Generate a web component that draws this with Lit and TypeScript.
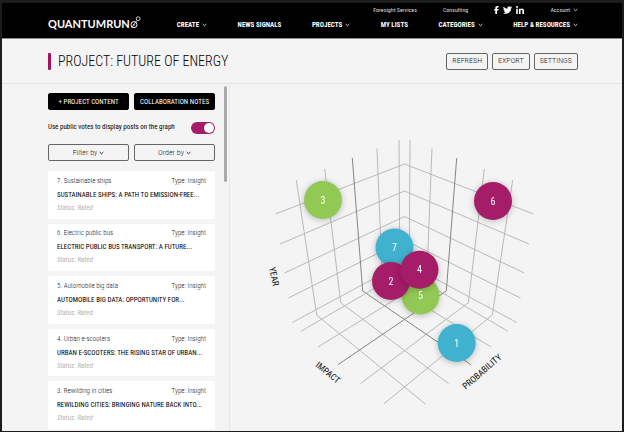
import { LitElement, html, svg, css } from "lit";
import { customElement, state } from "lit/decorators.js";

type Point = [number, number];

interface Post {
  id: number;
  topic: string;
  title: string;
}

interface Bubble {
  id: number;
  x: number;
  y: number;
  tone: "green" | "plum" | "blue";
}

const posts: Post[] = [
  { id: 7, topic: "Sustainable ships", title: "SUSTAINABLE SHIPS: A PATH TO EMISSION-FREE..." },
  { id: 6, topic: "Electric public bus", title: "ELECTRIC PUBLIC BUS TRANSPORT: A FUTURE..." },
  { id: 5, topic: "Automobile big data", title: "AUTOMOBILE BIG DATA: OPPORTUNITY FOR..." },
  { id: 4, topic: "Urban e-scooters", title: "URBAN E-SCOOTERS: THE RISING STAR OF URBAN..." },
  { id: 3, topic: "Rewilding in cities", title: "REWILDING CITIES: BRINGING NATURE BACK INTO..." },
];

const navItems = [
  { label: "CREATE", menu: true },
  { label: "NEWS SIGNALS", menu: false },
  { label: "PROJECTS", menu: true },
  { label: "MY LISTS", menu: false },
  { label: "CATEGORIES", menu: true },
  { label: "HELP & RESOURCES", menu: true },
];

const bubbles: Bubble[] = [
  { id: 3, x: 323, y: 200, tone: "green" },
  { id: 6, x: 493, y: 201, tone: "plum" },
  { id: 7, x: 394.5, y: 247.5, tone: "blue" },
  { id: 5, x: 420.5, y: 295.5, tone: "green" },
  { id: 2, x: 391, y: 281, tone: "plum" },
  { id: 4, x: 419.5, y: 269.7, tone: "plum" },
  { id: 1, x: 456.7, y: 343, tone: "blue" },
];

/* Left half of the cube; the right half is its reflection. */
const levels: [Point, Point][] = [
  [[275.5, 214], [404.5, 164]],
  [[280, 244], [404.5, 191]],
  [[284.5, 273], [404.5, 216.5]],
  [[288.5, 298], [404.5, 240]],
  [[292.3, 322.5], [404.5, 262]],
];

const columns: { path: Point[]; strong?: boolean }[] = [
  { path: [[296.3, 180], [316.7, 315], [425.3, 404]] },
  { path: [[324.7, 169], [340.7, 302.7], [448.6, 383.7]] },
  { path: [[352.3, 158], [362.7, 291], [471, 364.7]], strong: true },
  { path: [[377, 148.5], [382.3, 280], [491, 347]] },
  { path: [[399, 140], [399.8, 268], [508, 331.3]] },
];

const mirror = ([x, y]: Point): Point => [809 - x, y];
const toPoints = (path: Point[]) => path.map((p) => p.join(",")).join(" ");

const chevron = html`<svg class="chevron" viewBox="0 0 6 4" aria-hidden="true">
  <path d="M0.8 0.8 L3 2.9 L5.2 0.8" fill="none" stroke="currentColor" />
</svg>`;

@customElement("app-header")
export class AppHeader extends LitElement {
  static styles = css`
    :host {
      display: flex;
      align-items: flex-end;
      gap: 36px;
      padding: 2px 44px 8px 46px;
      background: #000;
      border-bottom: 1px solid #8a8a8a;
      color: #fff;
    }
    .logo {
      display: flex;
      align-items: flex-end;
      color: #fff;
      text-decoration: none;
      font: 700 11px/12px Lato, sans-serif;
    }
    .mark {
      width: 11px;
      height: 13px;
      margin-bottom: 1px;
    }
    .menus {
      flex: 1;
      min-width: 0;
      display: flex;
      flex-direction: column;
      gap: 5px;
    }
    .top,
    .main {
      display: flex;
      align-items: center;
    }
    .top {
      justify-content: flex-end;
      gap: 26px;
      font-size: 6px;
      line-height: 10px;
      color: #ddd;
    }
    .main {
      justify-content: space-between;
      font-size: 7px;
      line-height: 10px;
      font-weight: 700;
    }
    a,
    button {
      color: inherit;
      text-decoration: none;
      white-space: nowrap;
    }
    button {
      display: flex;
      align-items: center;
      gap: 3px;
      padding: 0;
      border: 0;
      background: none;
      font: inherit;
    }
    .chevron {
      width: 5px;
      height: 4px;
    }
    .social {
      display: flex;
      align-items: center;
      gap: 4px;
      color: #fff;
    }
    .social a {
      display: flex;
    }
    .social svg {
      height: 8px;
    }
  `;

  render() {
    return html`
      <a class="logo" href="#" aria-label="Quantumrun home">
        <span>QUANTUMRUN</span>
        <svg class="mark" viewBox="0 0 11 13" fill="none" stroke="#fff" aria-hidden="true">
          <circle cx="4" cy="8.6" r="3" />
          <circle cx="8.2" cy="2.7" r="1.9" stroke-width="0.8" />
          <path d="M1.5 11.5 L7 4.5 M3 8.8 h2" stroke-width="0.8" />
        </svg>
      </a>
      <div class="menus">
        <div class="top">
          <a href="#">Foresight Services</a>
          <a href="#">Consulting</a>
          <div class="social">
            <a href="#" aria-label="Facebook">
              <svg viewBox="0 0 5 8" fill="currentColor">
                <path d="M1.3 8 V4.5 H0.2 V3.1 H1.3 V2.1 C1.3 0.8 2 0.1 3.3 0.1 H4.6 V1.5 H3.7 C3.2 1.5 3 1.7 3 2.2 V3.1 H4.6 L4.4 4.5 H3 V8 Z" />
              </svg>
            </a>
            <a href="#" aria-label="Twitter">
              <svg viewBox="0 0 24 21" fill="currentColor">
                <path d="M24 3.2 a10 10 0 0 1-2.8.8 a5 5 0 0 0 2.1-2.7 a10 10 0 0 1-3.1 1.2 a4.9 4.9 0 0 0-8.4 4.5 A14 14 0 0 1 1.7 1.8 a4.9 4.9 0 0 0 1.5 6.6 a4.9 4.9 0 0 1-2.2-.6 a4.9 4.9 0 0 0 3.9 4.9 a5 5 0 0 1-2.2.1 a4.9 4.9 0 0 0 4.6 3.4 A9.9 9.9 0 0 1 0 18.2 a14 14 0 0 0 21.5-12.4 A10 10 0 0 0 24 3.2 Z" />
              </svg>
            </a>
            <a href="#" aria-label="LinkedIn">
              <svg viewBox="0 0 8 8" fill="currentColor">
                <circle cx="1" cy="1" r="1" />
                <path d="M0.2 2.7 H1.8 V8 H0.2 Z M2.9 2.7 H4.4 V3.4 C4.7 2.9 5.2 2.6 6 2.6 C7.4 2.6 8 3.5 8 4.9 V8 H6.4 V5.2 C6.4 4.5 6.2 4 5.5 4 C4.8 4 4.5 4.5 4.5 5.2 V8 H2.9 Z" />
              </svg>
            </a>
          </div>
          <button type="button">Account ${chevron}</button>
        </div>
        <nav class="main">
          ${navItems.map((item) =>
            item.menu
              ? html`<button type="button">${item.label} ${chevron}</button>`
              : html`<a href="#">${item.label}</a>`,
          )}
        </nav>
      </div>
    `;
  }
}

@customElement("post-card")
export class PostCard extends LitElement {
  static properties = { post: { attribute: false } };
  declare post: Post;

  static styles = css`
    :host {
      display: flex;
      flex-direction: column;
      justify-content: center;
      gap: 4px;
      min-width: 0;
      padding: 0 9px;
      background: #fff;
      border-radius: 2px;
      font-size: 7px;
      line-height: 9px;
      color: #555;
      white-space: nowrap;
    }
    .meta {
      display: flex;
      justify-content: space-between;
      font-weight: 300;
      color: #222;
    }
    .title {
      margin: 0;
      font-size: 7px;
      line-height: 10px;
      font-weight: 400;
      color: #000;
    }
    .status {
      font-style: italic;
      color: #b4b4b4;
    }
  `;

  render() {
    return html`
      <div class="meta">
        <span>${this.post.id}. ${this.post.topic}</span>
        <span>Type: Insight</span>
      </div>
      <h2 class="title">${this.post.title}</h2>
      <div class="status">Status: Rated</div>
    `;
  }
}

@customElement("project-graph")
export class ProjectGraph extends LitElement {
  static styles = css`
    :host {
      display: flex;
      min-width: 0;
    }
    .graph {
      width: 100%;
      height: 100%;
    }
    .line {
      fill: none;
      stroke: #b9b9b9;
      stroke-width: 1;
    }
    .strong {
      stroke: #858585;
    }
    .axis {
      font-size: 9px;
      fill: #111;
      text-anchor: middle;
    }
    .bubble {
      filter: drop-shadow(0 1px 3px rgb(0 0 0 / 0.25));
    }
    .green {
      fill: #92c954;
    }
    .plum {
      fill: #a51c68;
    }
    .blue {
      fill: #40b2d0;
    }
    .number {
      font-size: 10px;
      fill: #fff;
      text-anchor: middle;
    }
  `;

  render() {
    return html`
      <svg class="graph" viewBox="230 84 392 347" role="img" aria-label="Posts by year, impact and probability">
        ${levels.map(
          ([edge, centre]) => svg`<polyline class="line" points=${toPoints([edge, centre, mirror(edge)])} />`,
        )}
        ${columns.map(
          ({ path, strong }) => svg`
            <polyline class="line ${strong ? "strong" : ""}" points=${toPoints(path)} />
            <polyline class="line ${strong ? "strong" : ""}" points=${toPoints(path.map(mirror))} />`,
        )}
        <text class="axis" transform="translate(271 277) rotate(78)">YEAR</text>
        <text class="axis" transform="translate(326 375) rotate(39)">IMPACT</text>
        <text class="axis" transform="translate(484 374) rotate(-41)">PROBABILITY</text>
        ${bubbles.map(
          (b) => svg`
            <g class="bubble">
              <circle class=${b.tone} cx=${b.x} cy=${b.y} r="19" />
              <text class="number" x=${b.x} y=${b.y + 3.5}>${b.id}</text>
            </g>`,
        )}
      </svg>
    `;
  }
}

@customElement("app-root")
export class AppRoot extends LitElement {
  @state() private publicVotes = true;

  static styles = css`
    :host {
      display: flex;
      flex-direction: column;
      box-sizing: border-box;
      min-height: 100vh;
      padding: 3px 2px 1px;
      background: #1b1c1e;
      color: #111;
      font-family: "Liberation Sans Narrow", "Roboto Condensed", Roboto, sans-serif;
    }
    .heading {
      display: flex;
      align-items: center;
      justify-content: space-between;
      padding: 13px 44px 13px 46px;
      background: #f4f4f4;
      border-bottom: 1px solid #e4e4e4;
    }
    .name {
      display: flex;
      align-items: center;
      gap: 7px;
      margin: 0;
      font-size: 14px;
      line-height: 18px;
      font-weight: 300;
      color: #000;
    }
    .name::before {
      content: "";
      width: 3px;
      height: 17px;
      border-radius: 1px;
      background: #a5105f;
    }
    .actions {
      display: flex;
      gap: 4px;
    }
    .btn {
      box-sizing: border-box;
      height: 17px;
      padding: 0 5px;
      border: 1px solid #666;
      border-radius: 2px;
      background: none;
      color: #222;
      font: 300 8px/10px "Liberation Sans Narrow", "Roboto Condensed", Roboto, sans-serif;
      white-space: nowrap;
    }
    .btn.dark {
      padding: 0;
      background: #000;
      border-color: #000;
      color: #fff;
      font-size: 7px;
      font-weight: 400;
    }
    .body {
      flex: 1;
      display: grid;
      grid-template-columns: 228px 1fr;
      background: #f4f4f4;
    }
    .side {
      position: relative;
      display: flex;
      flex-direction: column;
      padding: 9px 14px 2px 46px;
      border-right: 1px solid #e6e6e6;
    }
    .thumb {
      position: absolute;
      top: 2px;
      right: 2px;
      width: 3px;
      height: 96px;
      border-radius: 2px;
      background: #aaa;
    }
    .pair {
      display: grid;
      grid-template-columns: 1fr 1fr;
      gap: 5px;
    }
    .votes {
      display: flex;
      align-items: center;
      justify-content: space-between;
      margin: 11px 0 10px;
      font-size: 7px;
      line-height: 13px;
      color: #000;
      white-space: nowrap;
    }
    .switch {
      appearance: none;
      display: flex;
      flex: none;
      width: 24px;
      height: 12px;
      margin: 0;
      padding: 1px;
      box-sizing: border-box;
      border-radius: 6px;
      background: #999;
    }
    .switch::before {
      content: "";
      width: 10px;
      height: 10px;
      border-radius: 5px;
      background: #fff;
    }
    .switch:checked {
      justify-content: flex-end;
      background: #a51c68;
    }
    .pick {
      display: flex;
      align-items: center;
      justify-content: center;
      gap: 2px;
    }
    .pick select {
      appearance: none;
      field-sizing: content;
      padding: 0;
      border: 0;
      background: none;
      color: inherit;
      font: inherit;
    }
    .chevron {
      width: 5px;
      height: 4px;
      color: #000;
    }
    .list {
      flex: 1;
      display: grid;
      grid-auto-rows: minmax(47px, 1fr);
      gap: 5px;
      margin-top: 10px;
    }
  `;

  render() {
    return html`
      <app-header></app-header>
      <div class="heading">
        <h1 class="name">PROJECT: FUTURE OF ENERGY</h1>
        <div class="actions">
          <button class="btn" type="button">REFRESH</button>
          <button class="btn" type="button">EXPORT</button>
          <button class="btn" type="button">SETTINGS</button>
        </div>
      </div>
      <main class="body">
        <section class="side">
          <div class="thumb"></div>
          <div class="pair">
            <button class="btn dark" type="button">+ PROJECT CONTENT</button>
            <button class="btn dark" type="button">COLLABORATION NOTES</button>
          </div>
          <label class="votes">
            Use public votes to display posts on the graph
            <input
              class="switch"
              type="checkbox"
              .checked=${this.publicVotes}
              @change=${(e: Event) => (this.publicVotes = (e.target as HTMLInputElement).checked)}
            />
          </label>
          <div class="pair">
            <label class="btn pick">
              <select aria-label="Filter by"><option>Filter by</option></select>${chevron}
            </label>
            <label class="btn pick">
              <select aria-label="Order by"><option>Order by</option></select>${chevron}
            </label>
          </div>
          <div class="list">${posts.map((post) => html`<post-card .post=${post}></post-card>`)}</div>
        </section>
        <project-graph></project-graph>
      </main>
    `;
  }
}
